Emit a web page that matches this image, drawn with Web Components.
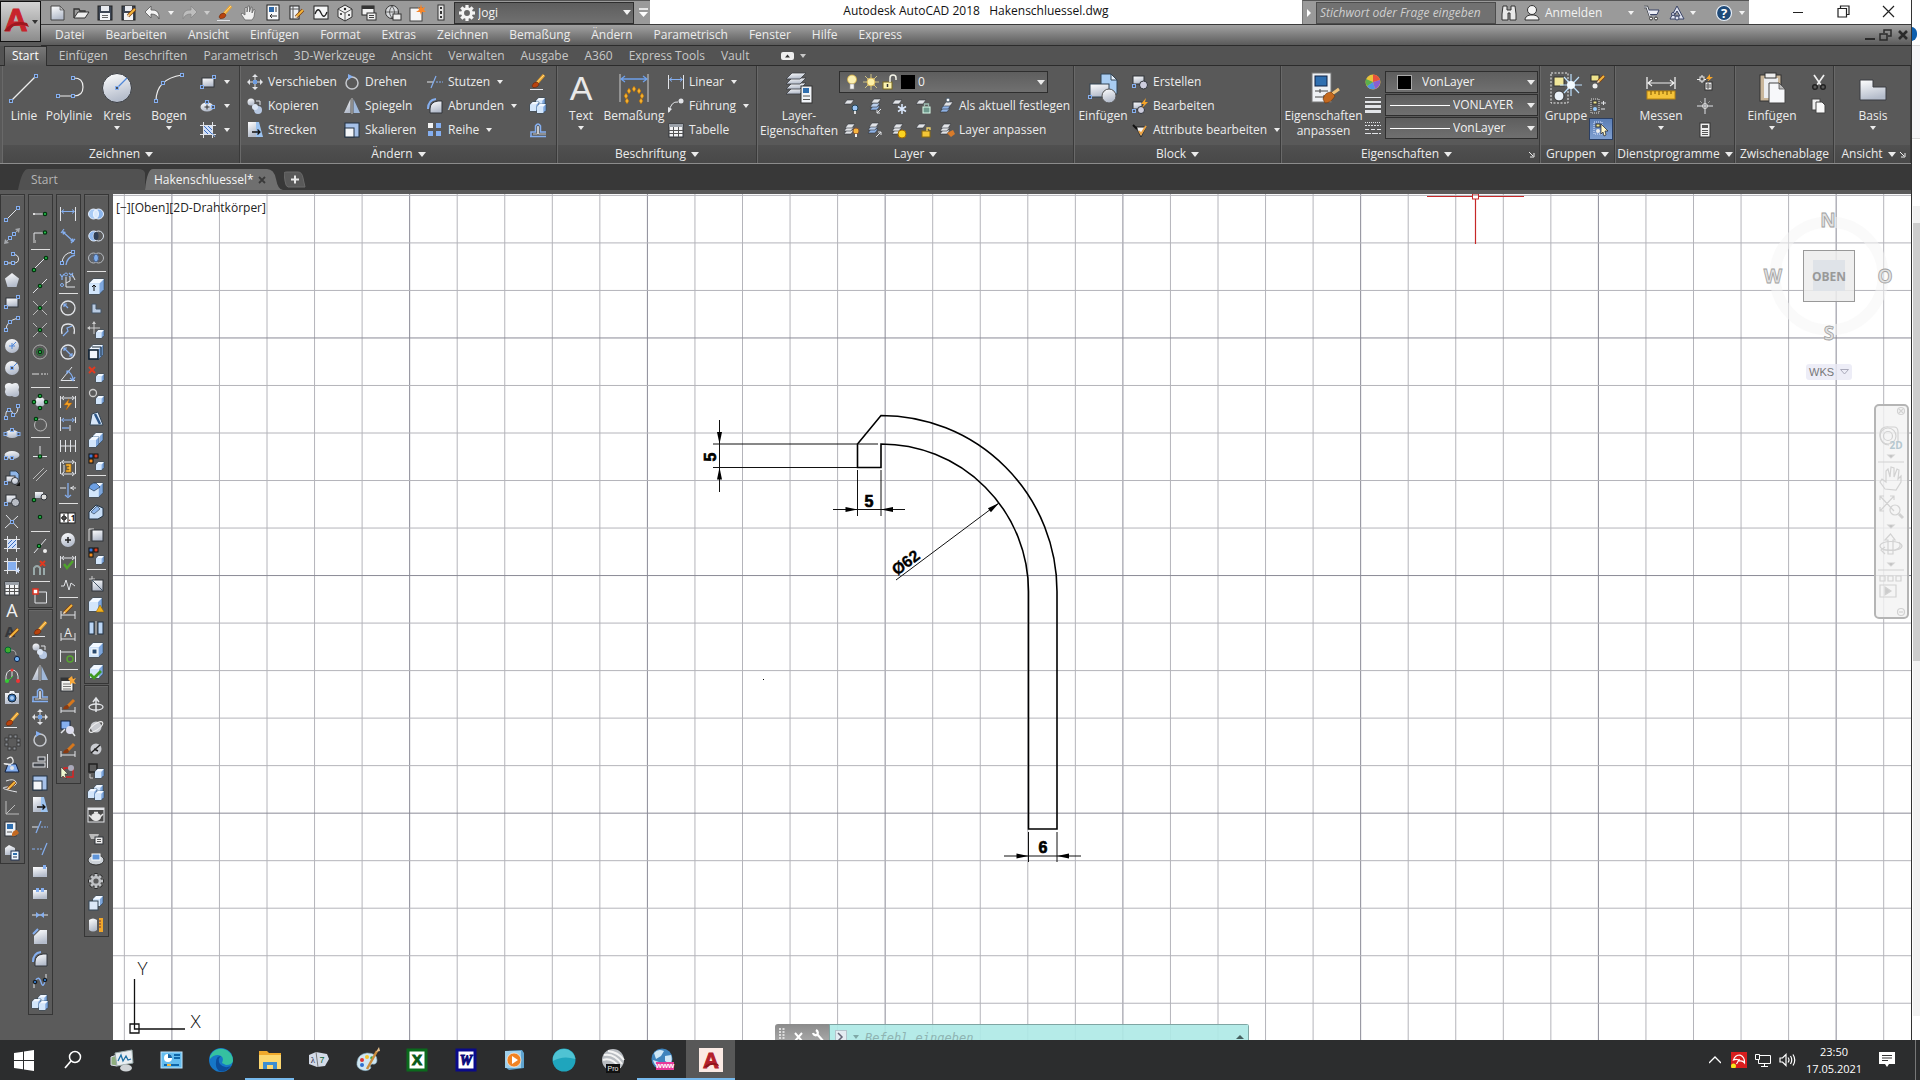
<!DOCTYPE html>
<html lang="de">
<head>
<meta charset="utf-8">
<title>Autodesk AutoCAD 2018 - Hakenschluessel.dwg</title>
<style>
html,body{margin:0;height:100%;overflow:hidden}
body{font:12px/16px "Open Sans","Noto Sans",sans-serif;color:#ececec;background:#fff}
</style>
</head>
<body>
<cad-desktop></cad-desktop>
<script>
const BASE = `*{box-sizing:border-box}
button,select,input{font:inherit;color:inherit;background:none;border:0;padding:0;margin:0;border-radius:0;outline:0}
button{cursor:pointer;white-space:nowrap}
.caret{flex:none;width:0;height:0;border:3px solid transparent;border-top:4px solid currentColor;border-bottom:0}`;

/* ---------- icon library (16 unit and 32 unit grids) ---------- */
const W='#e2e4e8', B='#85aff0', G='url(#g)', K='#30343a';
const l=(d,c=W,w=1)=>`<path d="${d}" fill="none" stroke="${c}" stroke-width="${w}"/>`;
const f=(d,c=G,s='none',w=1)=>`<path d="${d}" fill="${c}" stroke="${s}" stroke-width="${w}"/>`;
const n=(...p)=>{let s='';for(let i=0;i<p.length;i+=2)s+=`<rect x="${p[i]-1.5}" y="${p[i+1]-1.5}" width="3" height="3" fill="#4b5058" stroke="${B}"/>`;return s};
const c=(x,y,r,fill=G,s='none',w=1)=>`<circle cx="${x}" cy="${y}" r="${r}" fill="${fill}" stroke="${s}" stroke-width="${w}"/>`;
const r=(x,y,w,h,fill=G,s='none',sw=1)=>`<rect x="${x}" y="${y}" width="${w}" height="${h}" fill="${fill}" stroke="${s}" stroke-width="${sw}"/>`;
const gd=(...p)=>{let s='';for(let i=0;i<p.length;i+=2)s+=c(p[i],p[i+1],1.7,'#22c04a','#04350f',1.2);return s};
const cube=(x,y,s)=>f(`M${x} ${y+s*.3}L${x+s*.3} ${y}H${x+s}V${y+s*.7}L${x+s*.7} ${y+s}H${x}z`,'#7ea6dc','#26435f',.6)+f(`M${x} ${y+s*.3}H${x+s*.7}V${y+s}H${x}z`,'#d3e6fb')+f(`M${x} ${y+s*.3}L${x+s*.3} ${y}H${x+s}L${x+s*.7} ${y+s*.3}z`,'#f2f8ff');
const pencil=(x,y,s=8)=>l(`M${x} ${y+s}L${x+s} ${y}`,'#7b3c10',3.4)+l(`M${x+1} ${y+s-1}L${x+s} ${y}`,'#f4b63c',2)+f(`M${x-1} ${y+s+1}l1-3 2 2z`,'#f6dcb4');
const brush=l('M7 9L14 1','#eda52c',3)+l('M7.500 8L14 1','#ffd98a',1)+f('M2 12Q3 8 7 8L9 10Q8 14 3 13.500z','#b8430e','#5b1d03',.5)+l('M0 15.500H13',W,1);
const red=(x,y,s=5)=>l(`M${x} ${y}l${s} ${s}M${x+s} ${y}l${-s} ${s}`,'#e03a20',2);
const lay=(x,y,cc=W)=>f(`M${x+3} ${y}h7l-3 4h-7z`,cc,K,.6);
const stack=(cc=W)=>lay(1,8,cc)+lay(1,5,W)+lay(2,2,W);
const dim=(d='')=>l('M.5 2V14M15.500 2V14')+d;
const arr=(y,cc=W)=>l(`M2 ${y}H14M4 ${y-2}L1.500 ${y}L4 ${y+2}M12 ${y-2}L14.500 ${y}L12 ${y+2}`,cc);
const colors=r(1,0,4,4,'#3c78d8','#111')+r(6,0,4,4,'#d63a1e','#111')+r(1,5,4,4,'#ee8a20','#111');
const txt=(t,x,y,s,cc,e='')=>`<text x="${x}" y="${y}" font-size="${s}" fill="${cc}" text-anchor="middle" font-family="Open Sans,sans-serif" ${e}>${t}</text>`;
const gear=(x,y,R,cc)=>{let s='';for(let i=0;i<8;i++)s+=`<rect x="${x-R*.2}" y="${y-R}" width="${R*.4}" height="${R*.5}" fill="${cc}" transform="rotate(${i*45} ${x} ${y})"/>`;return s+c(x,y,R*.55,'none',cc,R*.36)};
const hatch=l('M3.500 0V16M12.500 0V16M0 3.500H16M0 12.500H16',W,1);
const movex=l('M8 1V6M8 10V15M1 8H6M10 8H15',W,1)+f('M8 0l3 3H5zM8 16l3-3H5zM0 8l3-3v6zM16 8l-3-3v6z',W);
const ICONS={
line:l('M2 14L14 2')+n(2,14,14,2),
xline:l('M2 14L14 2','#a5a8ad')+f('M0 16l1-5 4 4zM16 0l-1 5-4-4z','#a5a8ad')+n(6,10,10,6),
pline:l('M2 13H10Q14.500 13 14.500 9T10 4.500H8')+n(2,13,9,13,9,4),
polygon:f('M8 1L15 6.500L12.500 15H3.500L1 6.500z'),
rect:r(2,4,12,9,G,K)+n(14,3,2,13),
arc:l('M2 14Q2 5 14 2')+n(2,14,6,6,14,2),
circle:c(8,8,7)+l('M8 5V11M5 8H11M8 8L12 4','#4f86d8'),
circle2:c(8,8,7)+l('M8 8L13 3','#4f86d8')+n(8,8),
cloud:f('M2 2Q5 0 8 2Q12 0 14 2Q16 5 14.500 8Q16 12 14 14Q11 16 8 14Q4 15 2 13Q0 10 1.500 7Q0 4 2 2z'),
spline:l('M2 14Q1 6 5 6Q8 6 9 10Q14 11 14 2')+n(2,14,5,6,9,11,14,2),
ellipse:`<ellipse cx="8" cy="8" rx="7" ry="4" fill="${G}"/>`+n(1.500,8,14.500,8,8,4),
ellipse2:`<ellipse cx="7" cy="9" rx="6.500" ry="4.500" fill="${G}"/>`+l('M7 6.500V11.500M4.500 9H9.500','#333')+n(7,4,13,9),
elarc:`<ellipse cx="8" cy="7" rx="7.500" ry="4" fill="${G}"/>`+n(2,10,8,10),
insblock:f('M6 1H12L15 4V11H6z','#8fb6e8','#345')+r(2,6,9,6,G,K)+c(11,11,3.500,G,K)+n(2,13)+f('M16 12v4h-4z','#111'),
block:r(2,3,10,8,G,K)+c(11.500,10.500,4,'#b8bcc4',K)+n(2,12),
point:l('M2 1L14 14M1 14L14 2')+n(8,8),
hatch:r(4,4,8,8,'#cfdffa')+l('M4 8l4-4M4 12l8-8M8 12l4-4','#3d6fc0')+hatch,
hatch2:r(4,4,8,8,'#cfdffa')+l('M4 8l4 4M4 4l8 8M8 4l4 4','#3d6fc0')+hatch+l('M12 11L15 15',B),
grad:r(4,4,8,8,B)+hatch+f('M11 13l4-4v6z','#cfe0ff'),
table:r(1,2,14,13,'#f2f3f5',K)+r(1,2,14,3,'#9aa0a8')+l('M1 8.500H15M1 11.500H15M5.500 5V15M10.500 5V15','#555'),
A:txt('A',8,15,18,'#f1f1f1'),
atext:txt('A',6,13,15,'#33373c','font-weight="bold"')+pencil(6,5),
greendots:c(4,4,3,'#3fae2f','#063')+c(13,13,2.600,'#6fb1f2','#124')+l('M7 4Q12 4 12 9','#aaa'),
arctan:l('M2 13Q1 2 8 2T14 13',W)+l('M8 2V9',W)+c(8,2,1.500,'#e33')+l('M3 14L9 8','#3c3')+c(3,13,2,'#3c3')+c(14,13,2,'#e33'),
camera:f('M1 3H5L6 1H10L11 3H15V14H1z')+c(8,8,4,'#3b73b4','#123')+c(8,8,2,'#a8cdf5'),
brush,
dots:['2 5','6 2','11 2','14 6','14 10','10 14','5 14','2 10'].map(p=>{const[a,b]=p.split(' ');return r(a-1,b-1,3,3,'#8b8f95','#333',.8)}).join(''),
magic:f('M1 16L4 8H12L15 16z',B,'#124')+l('M3 3Q8-1 9 4T3 8T7 9','#e6e6e6',1.300)+c(8,12,2,W),
spl2:l('M2 3Q10 0 12 4T3 9T13 14')+pencil(4,4,7),
ucs:l('M2 1V14H15M2 14L11 5','#bcbcbc'),
props:r(1,0,11,14,'#eef1f5',K)+r(3,2,6,5,'#2f6fb0')+l('M3 10H8','#555')+f('M8 12Q9 8 13 8L15 11Q12 15 8 14z','#c36a22'),
refdoc:f('M1 4L5 1L11 4V11H1z')+r(7,7,8,9,'#eef5ff','#235')+r(9,9,4,2,'#2f6fb0')+l('M9 13H13','#235'),
tpoint:l('M3 8H14',W)+r(1,7,2,2,'#ddd')+gd(13,8),
tfrom:l('M2 12V5H11',W,1)+r(1,12,3,3,'#999')+gd(13,4.500),
endp:l('M2 13L13 2')+gd(2,14,14,2),mid:l('M1 15L15 1')+gd(8,8),
inter:l('M1 1L15 15M15 1L1 15','#bbb')+gd(8,8),
appint:l('M1 1L5 5M11 11L15 15M15 1L1 15','#bbb')+gd(8,8),
center:c(8,8,7,'none','#aaa')+c(8,8,3.500,'none','#1a6a2a')+gd(8,8),
ext:l('M0 8H7','#ddd')+l('M9 8h2M12 8h2M15 8h1','#ddd'),
quad:c(8,8,5)+gd(8,2,2,8,14,8,8,14),
tang:c(8.500,9,6,'none','#bbb')+gd(4,3),
perp:l('M8 2V13M1 12.500H15')+gd(8,12.500),
para:l('M1 13L12 2M4 15L15 4','#bbb'),
insn:r(3,4,8,6)+c(12,9,3,'#ddd',K)+gd(2,12),
node:gd(8,7),
near:l('M2 15L14 1')+gd(7,8)+c(13,13,2,'#eee'),
nosnap:l('M2 15V8Q5 4 8 8V15M12 8V15','#9aa',2)+red(8,1),
osnap:l('M4 4H14.500V15H3V5')+r(1,1,5,5,'#fff','#d32',1.500),
copy:c(4,4,3.500)+c(11,12,4,'#b7c8e2')+c(8,9,3,'#dce6f4')+l('M9 3H13V7',W),
mirror:f('M6.500 1V15H0z')+f('M9.500 1V15H16z','#9fb8da')+l('M8 0V16','#ddd',.8),
offset:l('M0 14.500H16M1 14V10H5.500V4Q8 0 10.500 4V10H16',B,1.500)+l('M3 12H7.500V5Q8 3 8.500 5V12H16',W,.8),
move:movex+r(6,6,4,4,'#6f9de0'),
rotate:c(8,9,6,'none','#c5c8cd',1.500)+f('M4 0L9 2.500L4 6z',B),
align:l('M15.500 1V15')+r(1,10,12,4,'#42464c',W)+r(6,4,7,4,'#42464c',W),
scale:r(1,1,14,14,'#a6c1e8','#234')+r(1,6,9,9,'#f3f5f8','#234'),
stretch:r(1,0,8,15)+f('M9 0H12L16 15H9z','#9cc3f0')+l('M5 10H13M10.500 7.500L13 10L10.500 12.500','#111',1.300),
trim:l('M0 8H6')+l('M4 14L9 2',B,1.200)+l('M9 8h2M12 8h2M15 8h1',B),
extend:l('M0 8H3M5 8h2M8 8h2',B)+l('M10 14L15 2',B,1.200),
brkpt:r(1,4,14,10)+r(11,2,3,4,B),brk:r(1,5,14,9)+r(4,3,3,4,B)+r(9,3,3,4,B),
join:l('M0 8H16',W)+f('M4 5L8 8L4 11zM12 5L8 8L12 11z',B),
chamfer:f('M2 7L8 1H15V15H2z')+l('M1 5L6 0',B,2),
fillet:f('M3 15V11Q3 4 11 3H15V15z',G,K)+l('M1 11Q1 2 9 1',B,2),
blend:l('M3 8Q7 2 9 9T13 8',B,1.300)+l('M2 15V9M14 7V1',W)+c(3,9,1.800,'#2e6fb8','#111')+c(13,7,1.800,'#2e6fb8','#111'),
explode:cube(6,0,9)+cube(0,4,9)+cube(7,6,9),
array:r(1,1,5,5,'#f2f2f2')+r(9,1,5,5,B)+r(1,9,5,5,B)+r(9,9,5,5,B),
dlin:l('M.5 1V15M15.500 1V15')+arr(5.500,B),
dali:l('M1 5L4 1M11 15L15 11M3 4L13 13',B,1.200)+f('M2 3l4 1-3 3zM14 14l-4-1 3-3z',B),
darc:l('M2 14Q2 3 13 2')+l('M6 15Q7 7 15 5',B,1.300)+n(2,13,13,2),
dord:l('M6 5V15H15M6 11L10 9V5M12 2L15 8')+l('M0 2L2 5L4 2M2 5V8M9 1L13 5M13 1L9 5',B,1.200)+c(6,2.500,1.500,'none',B)+c(2,13,1.500,'none',B),
drad:c(8,8,7,'none',W,1.300)+l('M8 8L4 4M4 7V4H7',B,1.200),
djog:l('M2 12Q0 2 8 2T14 12',W,1.300)+l('M3 14L8 9L7 6L12 4',B,1.200),
ddia:c(8,8,7,'none',W,1.300)+l('M4 4L12 12M4 7V4H7M12 9V12H9',B,1.200),
dang:l('M12 1L1 14.500H15')+l('M7 5Q13 8 13 14M10 12L13 14.500L15 11M7 8V5H10',B,1.200),
dquick:dim(arr(4))+f('M9 5L4 11H8L6 16L12 9H8z','#f8a526','#b35c00',.5),
dbase:l('M.5 1V15M15.500 1V7M10 9V15')+arr(4,B)+l('M2 12H9',B,1.300),
dcont:dim(l('M5.500 2V14M10.500 2V14M0 8H16')),
dspace:dim(arr(2)+arr(14))+f('M6 4H11V12H6V10H9V9H7V7H9V6H6z','#f6b63b','#a86a00',.6)+l('M4 5V12',W),
dbreak:l('M0 6H6M10 6H16M14 4L11 6L14 8')+l('M8 1V14M5 13L8 15.500L11 13',B,1.300),
dtol:r(0,3,15,10,'#fff','#222')+l('M8 3V13M4 4V12M1 8H7','#111')+c(4,8,2,'none','#111')+txt('.1',12,11,8,'#111','font-weight="bold"'),
dcen:c(8,8,7)+l('M8 5V11M5 8H11','#222',1.500),
dinsp:dim(arr(4))+l('M4 10L7 14L13 7','#4fa32c',2.500),
djl:l('M1 10L4 10L6 4L9 14L11 7L15 10',W),
dedit:l('M1 7V15M15 7V15M1 11H15')+pencil(4,1,8),
dte:l('M1 7V15M15 7V15M1 13H15')+txt('A',8,11,12,'#eee'),
dupd:dim(l('M0 4H16'))+c(10,11,3,'none','#57a332',1.500),
dstyle:r(1,2,12,13,'#f1f1ee',K)+r(1,2,12,3,'#333')+l('M3 8H11M3 10.500H11M3 13H11','#777')+f('M12 0l1 3 3-1-2 3 2 3-4-1-2 2V5L8 3z','#f8a83a'),
dbrush:l('M1 9V15M15 9V15M1 13H15')+l('M8 8L14 2','#d6771c',3)+f('M3 11Q4 7 8 7L9 10Q7 12 3 11z','#8a3a10'),
dzoom:r(1,1,9,8,B,'#124')+c(10,10,4,'#dde')+l('M5 9L1 13M12 12L15 16',W,1.500),
dsel:r(4,4,9,9,'none','#d22',1.500)+c(11,4,3,'#aab')+f('M1 3L8 10H5L6 15L3 12L1 14z','#eef7d0','#222',.5),
union:c(5.500,8,5,'#a9cbf5','#e8f1ff')+c(10.500,8,5,'#8bb5ec','#e8f1ff')+`<ellipse cx="8" cy="8" rx="2.500" ry="4" fill="#d8e8fc" stroke="#eef5ff"/>`,
subtr:c(10.500,8,5,'none','#dfe8f4')+f('M8 3.500A5 5 0 1 0 8 12.500A5 5 0 0 1 8 3.500z','#8fb8ee','#e8f1ff')+`<ellipse cx="8" cy="8" rx="2.500" ry="4" fill="#2e3e55"/>`,
intersect:c(5.500,8,5,'#60656c','#b5b9bf')+c(10.500,8,5,'none','#b5b9bf')+`<ellipse cx="8" cy="8" rx="2.500" ry="4" fill="#7fadeb" stroke="#124" stroke-width=".6"/>`,
box:cube(1,1,15)+l('M6 13V8M4 9L6 7L8 9','#111'),
lsolid:f('M4 4H8V9H13V13H4z','#b9cbe2','#456'),
mcube:l('M6 0V12M0 6H12','#ccc')+f('M6-1l2 3H4zM-1 6l3-2v4z','#ccc')+cube(8,8,8),
cubes:cube(1,1,14)+r(1,6,9,9,'#f2f6fb','#123',1.600)+l('M4 3H13V12','#123'),
xcube:red(1,1,6)+cube(8,8,8),rcube:c(5,5,3.500,'none','#ccc',1.300)+cube(8,8,8),
taper:f('M2 15L4 4L10 2L15 15z','#d8e7f9','#345')+l('M7 4L12 14','#2c5688',2.500),
stackc:cube(5,1,10)+cube(1,5,10),colcube:colors+cube(8,8,8),
filc:cube(1,1,14)+f('M1 6Q2 1 8 1L12 5L6 9z','#6d9fe2','#123',.6),chac:f('M1 8L8 1L15 4V12L10 15H1z','#c8def7','#234')+f('M3 8L9 2L12 5L6 10z','#8fb6ea','#234',.6),
shellc:l('M1 15V3H6','#ddd')+r(4,4,11,11,G,K),
imprint:l('M4 0V6M1 3H7','#ccc')+r(4,4,11,11,G,K)+l('M4 4L15 15','#456'),
warnc:cube(1,0,13)+f('M12 7L16 14H8z','#f2b21c','#8a5a00',.5),
mirr3:r(1,2,5,12,'#bcd6f5','#234')+r(10,2,5,12,'#bcd6f5','#234')+l('M8 1V15','#ccc'),
shell:cube(1,1,14)+r(4,7,5,5,'#27496f','#fff'),chkc:cube(2,1,13)+l('M2 10L6 14L13 7','#3f9a22',2.800),
orb1:l('M8 2V15M5 5L8 1L11 5',W,1.500)+`<ellipse cx="8" cy="10" rx="7" ry="3" fill="none" stroke="${W}" stroke-width="1.300"/>`,
orb2:c(8,8,5.500,'#c9cbd0')+`<ellipse cx="8" cy="8" rx="8" ry="3" fill="none" stroke="#eee" transform="rotate(-35 8 8)"/>`,
orb3:c(8,8,5.500,'#c9cbd0')+l('M3 12L12 4M6 8L10 10','#222',1.500),
views:r(1,1,8,8,'none','#222',1.500)+cube(7,6,9)+l('M2 11V15H5','#ccc'),
pot:r(0,1,16,14,'#4a4a4a',W)+r(0,1,16,2,W)+`<ellipse cx="8" cy="10" rx="5" ry="4" fill="#e9e9e9"/>`+l('M1 8L4 11M15 7L12 10M6 5.500H10','#e9e9e9',1.500),
pot2:f('M1 5H11L9 10H3z','#bbb')+r(7,8,8,7,'#eee',K)+l('M9 10.500H13M9 12.500H13','#555'),
pot3:`<ellipse cx="8" cy="9" rx="8" ry="5" fill="#cdd2d8" stroke="#333"/>`+r(4,3,8,6,'#5f94d8','#fff'),
gear:gear(8,8,8,'#2c2c2c')+gear(8,8,7,'#c0c2c5'),
stack2:cube(5,1,10)+r(1,6,9,9,'#dbe8f8','#345'),
cyl:f('M1 3Q5 0 9 3V13Q5 16 1 13z')+r(11,1,4,14,'#f0a62a')+l('M11 4H13M11 7H13M11 10H13','#733'),
new:f('M2 1H11L15 5V15H2z',G,'#444')+f('M11 1V5H15z','#bbb','#444',.6),
open:f('M1 13V4H6L7 6H12V8','none','#333',1.300)+f('M1 13L5 7H16L12 13z','#eee','#333'),
save:r(1,1,14,14,'#3d4654','#222')+r(4,1,8,5,'#e8eaee')+r(3,8,10,7,'#f3f4f6')+l('M5 10.500H11M5 12.500H11','#666'),
saveas:r(1,1,13,14,'#3d4654','#222')+r(4,1,7,5,'#e8eaee')+r(3,8,9,7,'#f3f4f6')+pencil(7,4,7),
undo:f('M0 7L6 1V5Q15 4 14 14Q12 9 6 9V13z','#f4f4f4','#555',.8),
redo:f('M16 7L10 1V5Q1 4 2 14Q4 9 10 9V13z','#bdbdbd','#888',.8),
hand:f('M4 15L0 9L1 8L4 10V3L5 2L6 3V7L7 1L8.500 1V7L10 2L11 2L11 8L13 4L14 5L13 12L11 15z','#f0f0f0','#666',.8),
sheet:r(2,0,12,15,'#f7f8fa','#222')+r(4,2,5,5,'#2e68a8')+l('M11 2V7M5 11H12M7 9L5 11L7 13','#333'),
sheetp:r(1,1,9,13,'#eef1f5','#222')+l('M1 4H10M4 1V14','#555')+pencil(7,5,7),
graph:r(1,1,14,13,'#f4f5f6','#222')+l('M2 9Q5 1 8 8T14 7','#222',1.300),
dice:f('M8 0L15 4V12L8 16L1 12V4z','#f0f0f0','#333')+l('M1 4L8 8L15 4M8 8V16','#333',.8)+c(8,4,1.200,'#222')+c(4,9,1,'#222')+c(12,10,1,'#222'),
props2:r(1,1,12,9,'#f3f3f3','#222')+r(1,1,12,3,'#333')+r(6,8,9,7,'#eee','#333')+l('M8 10.500H13M8 12.500H13','#444'),
globe:c(7,7,6.500,'#d8dadd','#333')+l('M1 7H14M7 1Q2 7 7 13M7 1Q12 7 7 13','#444',.8)+r(8,9,8,6,'#eee','#333'),
newstar:r(1,3,12,13,'#f6f6f6','#444')+f('M12-1l1 4 3-1-1 3 2 2-4 0-1 3-1-3-4 0 3-2-1-3 2 1z','#f6862a'),
bar:r(5,0,6,15,'#e6e6e6','#333')+r(7,2,2,2,'#333')+r(7,6,2,3,'#333')+r(7,11,2,2,'#333'),
gearw:gear(8,8,8,'#f4f4f4'),
binoc:f('M2 1H6V5H10V1H14L15 9V15H9V8H7V15H1V9z','#e9e9e9','#333'),
person:c(8,5,4.500,'#f4f4f4','#333')+f('M1 15Q1 11 6 10H10Q15 11 15 15z','#f4f4f4','#333'),
cart:l('M0 2H3L6 10.500H13',K,2.600)+f('M4 5H15L13 9.500H5.500z','#eceef6','#3a4466')+l('M0 2H3L6 11H13','#eceef6',1.200)+c(7,13.500,1.500,'#fff','#333')+c(12,13.500,1.500,'#fff','#333'),
a360:f('M8 1L15 14H1zM8 6L5 11H11z','#dfe3f2','#3a4466')+c(8,13,2,'#dfe3f2','#3a4466')+c(4,9,1.500,'#dfe3f2','#3a4466'),
help:c(8,8,7.500,'#1f4a78','#e8eef6',1.200)+txt('?',8,13,13,'#fff','font-weight="bold"'),
mleader:l('M1 14Q3 3 10 4')+f('M0 15V9L4 11z',W)+c(13,3,2.500,W),
lay1:lay(1,2)+c(12,10,3,'#9cc6f7','#245')+r(11,13,2,3,'#ddd'),lay2:lay(3,8,'#8fb3e6')+lay(3,5,'#b9cdea')+lay(4,1)+l('M14 11L10 15M10 12V15H13',W),
lay3:lay(1,2)+l('M11 6V16M7 8.500L15 13.500M15 8.500L7 13.500','#dceaff',1.500),lay4:lay(1,2)+r(8,9,7,6,'#6f9a8d','#dfe')+l('M9.500 9V6H13.500V9','#9cbab0',1.300),
lay5:lay(1,10,'#8fb3e6')+lay(2,7,'#8fb3e6')+lay(4,4)+c(9,2,2,'#fff','#456'),
lay6:stack()+c(13,9,3,'#f8b53c','#853')+r(12,12,2,3,'#eee'),lay7:lay(1,7,'#8fb3e6')+lay(1,4,'#b9cdea')+lay(2,1)+l('M9 15L14 10M11 10H14V13',W),
lay8:stack()+c(11,12,4,'#fbd321','#a66b00'),lay9:lay(1,2)+r(7,9,8,6,'#f4c637','#8a6a10')+l('M12 9V6H15V8','#f4d66a',1.300),
lay10:stack()+f('M8 11L14 8L16 12L12 15z','#d87b2a'),
bulb:c(8,5.500,4.500,'#fbf0b2','#d8b040',.8)+r(6,10,4,5,'#f4f4f4','#999',.6),sun:l('M8 0V16M0 8H16M2 2L14 14M14 2L2 14','#e8d98a',.8)+c(8,8,4,'#fdf1a6','#d9b75a'),
lock:r(1,8,9,7,'#fbf3b0','#7a6a20')+l('M8 8V4Q8 1 11 1T14 4V6','#f4f4e8',1.500)+l('M5.500 10V13','#333',1.500),
bcreate:r(1,2,11,8,G,K)+c(11.500,11,4,'#ccd',K)+n(2,12),bedit:r(1,4,9,7,G,K)+c(9,12,3.500,'#ccd',K)+n(2,13)+f('M14 0L9 6H12L10 10L16 4H13z','#f6a428'),
battr:f('M4 5H14L9 15z','#f5f5f5','#222')+l('M1 3L5 7','#111',2)+l('M7 9L9 12L14 4','#e8a040',1.800),
wheel:c(8,8,7.500,'#eac33b')+f('M8 8L8 .5A7.500 7.500 0 0 1 15 6z','#e9523c')+f('M8 8L15 6A7.500 7.500 0 0 1 10 15z','#8a5fd0')+f('M8 8L10 15A7.500 7.500 0 0 1 2 12z','#4f92e6')+f('M8 8L2 12A7.500 7.500 0 0 1 1 5z','#5bb04c'),
lw:r(0,0,16,1,W)+r(0,4,16,2,W)+r(0,8,16,3,W)+r(0,13,16,3,W),
lt:`<g stroke="${W}" stroke-width="1"><path d="M0 2.500H16" stroke-dasharray="1 1"/><path d="M0 5.500H16" stroke-dasharray="2 1"/><path d="M0 9.500H16" stroke-dasharray="4 2"/><path d="M0 13.500H16" stroke-dasharray="6 1"/></g>`,
g1:r(1,1,8,6,'#eee38c','#333')+pencil(8,2,6)+c(5,12,2.500,'#eee'),g2:`<path d="M1 1H9V15H1z" fill="none" stroke="#ddd" stroke-dasharray="1 1"/>`+r(3,3,4,3,'#f0e68c','#333')+c(5,11,2,'#9cf')+l('M11 5H16M13.500 3V7M11 11H15',W),
g3:`<path d="M1 1H9V13H1z" fill="none" stroke="#dde6ff" stroke-dasharray="1 1"/>`+r(3,3,4,3,'#f0e68c','#333')+c(5,10,2,'#eee')+f('M8 3L15 10H12L13 14L11 15L10 11L8 13z','#fff6c8','#222',.7),
mid1:l('M5 1V9M0 5.500H9','#eee')+r(3,3,4,4,'#555','#eee')+f('M13 0L9 5H12L10 8L16 3H13z','#f6a428')+r(8,8,7,8,'#eee','#333')+l('M9 11H14M9 13H14M11 9V15','#555'),
mid2:l('M8 0V16M0 8H16',W)+c(8,8,2.500,'none','#ddd')+l('M3 3L5 5M13 3L11 5','#999'),
calc:r(3,1,10,14,'#eee','#333')+r(5,3,6,3,'#555')+l('M5 8.500H11M5 10.500H11M5 12.500H11','#555',1.100),
cut:l('M3 1L10 11M13 1L6 11','#f0f0f0',1.700)+c(4,13,2.300,'none','#222',1.500)+c(12,13,2.300,'none','#222',1.500),
copyd:r(1,1,8,11,'#eee','#444')+f('M5 4H11L14 7V15H5z','#fafafa','#444'),
min:l('M2 8.500H12','#222'),max:l('M2 4.500H10.500V13H2zM4.500 4V2H13V10.500H11','#222',1.200),close:l('M2 2L13 13M13 2L2 13','#222',1.200),
dmin:l('M4 12H14','#2a2a2a',2),dmax:l('M2 7H9V13H2zM6 6V3H13V9H10','#2a2a2a',1.500),dclose:l('M4 4L12 12M12 4L4 12','#2a2a2a',2.600)
};
const BIG={
line:l('M3 29L28 4','#eee',1.200)+n(3,29,28,4),
pline:l('M5 24H21Q30 24 30 15T21 6','#eee',1.200)+n(5,24,20,24,20,6),
circle:c(16,16,14.500,G,'#3a3d42')+l('M16 16L26 6','#4f86d8',1.300)+n(16,16),
arc:l('M3 29Q3 7 29 3','#eee',1.200)+n(3,29,10,11,29,3),
A:'<text x="16" y="28" font-size="34" fill="#e9e9e9" text-anchor="middle" font-family="Liberation Sans,sans-serif">A</text>',
dim:l('M2 2V30M30 2V30','#ccc')+l('M3 7H29M7 4L3 7L7 10M25 4L29 7L25 10','#6ea0ea',1.300)+[[8,24],[11,19],[16,17],[21,19],[24,24],[9,29],[23,29]].map(p=>f(`M${p[0]} ${p[1]-3}l2 3-2 3-2-3z`,'#f6b02c','#a66000',.5)).join(''),
layers:[19,14,9,4].map(y=>f(`M9 ${y-3}H23L17 ${y+3}H3z`,G,'#3a3d42',.8)).join('')+r(18,14,11,17,'#f1f4f8','#333')+r(20,16,6,5,'#2f6fb0')+l('M20 24H27M20 27.500H27','#555'),
insert:f('M14 2H24L30 8V22H14z','#a9cdf2','#345')+f('M24 2V8H30z','#e8f2fd','#345')+r(3,12,19,13,G,'#345')+c(22,24,7,G,'#555')+n(3,25),
props:r(4,1,19,29,'#eef1f5','#777')+r(7,4,12,10,'#2f6fb0','#124')+l('M7 19H20M7 25H20M12 17V21M16 23V27','#444')+l('M24 22L31 17','#eec27a',3)+f('M15 27Q17 20 23 20L27 24Q23 31 17 31z','#c4691f','#6a3208',.6),
group:`<path d="M1 1H18V31H1z" fill="none" stroke="#eee" stroke-dasharray="2 1.500"/>`+r(4,5,10,9,'#f1e79a','#333')+c(9,24,5,'#eaf1f8','#333')+l('M21 2V24M10 13H32M14 5L29 21M29 5L14 21','#bfe2ff',1.200)+c(21,13,4,'#f2faff'),
meas:l('M2 5V17M30 5V17','#eee',1.300)+l('M3 11H29M7 8L3 11L7 14M25 8L29 11L25 14','#eee',1.200)+r(2,19,28,8,'#f5c339','#b98410')+l('M6 19V23M10 19V22M14 19V23M18 19V22M22 19V23M26 19V22','#7a5400'),
paste:r(4,3,21,26,'#c9b69a','#333')+r(8,6,14,20,'#eceef1')+r(9,1,11,5,'#eee','#333')+f('M13 11H23L29 17V31H13z','#f7f8fa','#444')+f('M23 11V17H29z','#bbb','#444',.7),
basis:f('M3 8H16V15H29V28H3z',G,'#3a3d42')
};
const DEFS='<defs><linearGradient id="g" x1="0" y1="0" x2=".3" y2="1"><stop offset="0" stop-color="#fff"/><stop offset="1" stop-color="#b4bccb"/></linearGradient></defs>';

class Base extends HTMLElement{
  connectedCallback(){ if(this.shadowRoot) return;
    const s=this.attachShadow({mode:'open'}); s.innerHTML=`<style>${BASE}${this.css()}</style>${this.html()}`; }
  a(k,d=''){return this.getAttribute(k)??d}
}
const def=(name,css,html)=>customElements.define(name,class extends Base{css(){return css}html(){return typeof html==='function'?html(this):html}});

def('cad-icon',':host{display:block;flex:none;width:16px;height:16px}:host([big]){width:32px;height:32px}svg{display:block;width:100%;height:100%;overflow:visible}',
  e=>{const big=e.hasAttribute('big'),z=big?32:16;return `<svg viewBox="0 0 ${z} ${z}" aria-hidden="true">${DEFS}${(big?BIG:ICONS)[e.a('name')]||''}</svg>`});

/* labelled ribbon command on one 24px row */
def('cad-cmd',`:host{display:block;height:24px}button{display:flex;align-items:center;gap:4px;height:24px}cad-icon{margin:0 1px}.caret{margin-left:3px}
:host([on]) button{background:linear-gradient(#5c7fb6,#7f9fd0);border:1px solid #2b3f63;height:22px;padding:0 2px}`,
  e=>`<button type="button" aria-label="${e.a('label')||e.a('title')}"><cad-icon name="${e.a('icon')}"></cad-icon>${e.a('label')?`<span>${e.a('label')}</span>`:''}${e.hasAttribute('caret')?'<i class="caret"></i>':''}</button>`);

/* large command: picture above its label */
def('cad-big',`:host{display:block;height:76px}button{width:100%;display:flex;flex-direction:column;align-items:center;padding-top:2px;line-height:15px}span{margin-top:4px;text-align:center}.caret{margin-top:3px}`,
  e=>`<button type="button"><cad-icon big name="${e.a('icon')}"></cad-icon><span>${e.a('label').replace('|','<br>')}</span>${e.hasAttribute('caret')?'<i class="caret"></i>':''}</button>`);

def('cad-combo',`:host{display:block;height:22px}
div{display:flex;align-items:center;height:100%;border:1px solid #2e2e2e;background:linear-gradient(#5e5e5e,#707070);padding:0 2px 0 4px;gap:3px}
select{appearance:none;flex:1;min-width:0;height:100%;color:#f2f2f2}option{color:#222}.caret{border-width:5px 4px 0}`,
  e=>`<div><slot></slot><select aria-label="${e.a('title')}"><option>${e.a('value')}</option></select><i class="caret"></i></div>`);

def('cad-panel',`:host{display:flex;flex-direction:column;border-right:1px solid #3a3a3a;border-left:1px solid #696969;min-width:0}
.b{display:flex;height:79px;padding:4px 0 0 var(--pl,2px);background:#595959}
.f{display:flex;align-items:center;justify-content:center;height:18px;background:linear-gradient(#505050,#484848);position:relative;white-space:nowrap}
.f .caret{border-width:5px 4px 0}.f svg{position:absolute;right:4px;top:7px}:host([dlg]) .f{padding-right:8px}button{display:flex;align-items:center;gap:5px}`,
  e=>`<div class="b"><slot></slot></div><div class="f"><button type="button">${e.a('label')}${e.hasAttribute('plain')?'':'<i class="caret"></i>'}</button>${e.hasAttribute('dlg')?'<svg width="6" height="6"><path d="M0 0L4 4M5 1V5H1" stroke="#eee" fill="none"/></svg>':''}</div>`);

const I=name=>`<cad-icon name="${name}"></cad-icon>`;
const ib=(name,t)=>`<button type="button" aria-label="${t||name}">${I(name)}</button>`;
const cmds=s=>s.map(([i,t,k])=>`<cad-cmd icon="${i}" label="${t||''}" title="${t||i}" ${k?'caret':''}></cad-cmd>`).join('');

def('cad-ribbon',`:host{display:grid;grid-template-columns:238fr 317fr 200fr 317fr 207fr 259fr 75fr 120fr 99fr 77fr;padding-left:2px;background:#595959;height:98px;border-bottom:1px solid #8c8c8c}
.c{flex:none;width:var(--w)}cad-big{flex:none;width:var(--w)}.row{display:flex;height:24px;align-items:center;gap:8px;padding-left:4px;white-space:nowrap}.row button{display:flex;align-items:center;gap:4px}
cad-combo{flex:none}.lc{width:209px;margin:1px 0}.props{display:grid;grid-template-columns:20px 153px;align-items:center;align-content:start;row-gap:1px;padding-top:1px}
.sw{width:15px;height:15px;background:#000;border:1px solid #aaa;margin:0 7px}.sq{width:14px;height:14px;background:#000}.ln{flex:none;height:1px;width:60px;background:#fff}`,
`<cad-panel label="Zeichnen"><cad-big icon="line" label="Linie" style="--w:38px"></cad-big><cad-big icon="pline" label="Polylinie" style="--w:52px"></cad-big><cad-big icon="circle" label="Kreis" caret style="--w:44px"></cad-big><cad-big icon="arc" label="Bogen" caret style="--w:60px"></cad-big><div class="c" style="--w:34px">${cmds([['rect','',1],['ellipse2','',1],['hatch2','',1]])}</div></cad-panel>
<cad-panel label="Ändern" style="--pl:5px"><div class="c" style="--w:97px">${cmds([['move','Verschieben'],['copy','Kopieren'],['stretch','Strecken']])}</div><div class="c" style="--w:83px">${cmds([['rotate','Drehen'],['mirror','Spiegeln'],['scale','Skalieren']])}</div><div class="c" style="--w:103px">${cmds([['trim','Stutzen',1],['fillet','Abrunden',1],['array','Reihe',1]])}</div><div class="c">${cmds([['brush'],['explode'],['offset']])}</div></cad-panel>
<cad-panel label="Beschriftung" style="--pl:3px"><cad-big icon="A" label="Text" caret style="--w:40px"></cad-big><cad-big icon="dim" label="Bemaßung" style="--w:66px"></cad-big><div class="c">${cmds([['dlin','Linear',1],['mleader','Führung',1],['table','Tabelle']])}</div></cad-panel>
<cad-panel label="Layer" style="--pl:1px"><cad-big icon="layers" label="Layer-|Eigenschaften" style="--w:80px"></cad-big><div class="c"><cad-combo class="lc" title="Layer" value="0">${I('bulb')}${I('sun')}${I('lock')}<i class="sq"></i></cad-combo>
<div class="row">${ib('lay1')}${ib('lay2')}${ib('lay3')}${ib('lay4')}<button type="button">${I('lay5')}Als aktuell festlegen</button></div><div class="row">${ib('lay6')}${ib('lay7')}${ib('lay8')}${ib('lay9')}<button type="button">${I('lay10')}Layer anpassen</button></div></div></cad-panel>
<cad-panel label="Block" style="--pl:0px"><cad-big icon="insert" label="Einfügen" style="--w:56px"></cad-big><div class="c">${cmds([['bcreate','Erstellen'],['bedit','Bearbeiten'],['battr','Attribute bearbeiten',1]])}</div></cad-panel>
<cad-panel label="Eigenschaften" dlg style="--pl:0px"><cad-big icon="props" label="Eigenschaften|anpassen" style="--w:83px"></cad-big><div class="props">${I('wheel')}<cad-combo title="Farbe" value="VonLayer"><i class="sw"></i></cad-combo>${I('lw')}<cad-combo title="Linienstärke" value="VONLAYER"><i class="ln"></i></cad-combo>${I('lt')}<cad-combo title="Linientyp" value="VonLayer"><i class="ln"></i></cad-combo></div></cad-panel>
<cad-panel label="Gruppen"><cad-big icon="group" label="Gruppe" style="--w:46px"></cad-big><div class="c">${cmds([['g1'],['g2']])}<cad-cmd icon="g3" title="Gruppenauswahl" on></cad-cmd></div></cad-panel>
<cad-panel label="Dienstprogramme" style="--pl:14px"><cad-big icon="meas" label="Messen" caret style="--w:62px"></cad-big><div class="c" style="margin-left:4px">${cmds([['mid1'],['mid2'],['calc']])}</div></cad-panel>
<cad-panel label="Zwischenablage" plain style="--pl:8px"><cad-big icon="paste" label="Einfügen" caret style="--w:56px"></cad-big><div class="c" style="margin-left:10px">${cmds([['cut'],['copyd']])}</div></cad-panel>
<cad-panel label="Ansicht" dlg><cad-big icon="basis" label="Basis" caret style="--w:72px"></cad-big></cad-panel>`);

def('cad-titlebar',`:host{display:flex;height:24px;background:#fff;color:#f2f2f2}
.q{display:flex;align-items:center;gap:8px;padding-left:8px;width:609px;background:#9a9a9a;border-top:1px solid #555}
.q .caret{margin:0 -1px}.q cad-combo{width:180px;margin-left:-3px}.q button{display:block}.q>svg{margin-left:-3px}
h1{flex:1;margin:0;font-size:12px;line-height:21px;font-weight:400;color:#111;text-align:center;white-space:pre}
.s{display:flex;align-items:center;width:447px;background:#9a9a9a;border-top:1px solid #555;border-left:1px solid #777}
.s>i.tri{width:0;border:4px solid transparent;border-left:4px solid #fff;border-right:0;margin:0 5px 0 4px}
input{width:180px;height:22px;border:1px solid #4c4c4c;background:#717171;font-style:italic;padding:0 3px}input::placeholder{color:#cfcfcf;opacity:1}
.s button{display:flex;align-items:center;gap:5px}.w{display:flex;margin-left:27px}.w button{width:45px;display:grid;place-items:center;height:24px}`,
`<div class="q">${ib('new','Neu')}${ib('open','Öffnen')}${ib('save','Speichern')}${ib('saveas','Speichern unter')}${ib('undo','Zurück')}<i class="caret"></i>${ib('redo','Wiederherstellen')}<i class="caret" style="color:#ccc"></i>${ib('brush','Anpassen')}${ib('hand','Pan')}${ib('sheet')}${ib('sheetp')}${ib('graph')}${ib('dice')}${ib('props2')}${ib('globe')}${ib('newstar')}${ib('bar')}
<cad-combo title="Arbeitsbereich" value="Jogi">${I('gearw')}</cad-combo><svg width="9" height="12"><path d="M0 2H9" stroke="#fff" stroke-width="1.500"/><path d="M0 5H9L4.500 10z" fill="#fff"/></svg></div>
<h1>Autodesk AutoCAD 2018   Hakenschluessel.dwg</h1>
<div class="s"><i class="tri"></i><input aria-label="Suche" placeholder="Stichwort oder Frage eingeben"><button type="button" aria-label="Suchen" style="margin:0 7px 0 5px">${I('binoc')}</button><button type="button">${I('person')}Anmelden</button><i class="caret" style="margin-left:auto"></i><button type="button" aria-label="App Store" style="margin:0 9px 0 10px">${I('cart')}</button>${ib('a360','A360')}<i class="caret" style="margin:0 20px 0 5px"></i>${ib('help','Hilfe')}<i class="caret" style="margin:0 4px 0 7px"></i></div>
<div class="w">${ib('min','Minimieren')}${ib('max','Wiederherstellen')}${ib('close','Schließen')}</div>`);

def('cad-menubar',`:host{display:flex;align-items:center;height:22px;border-top:1px solid #3a3a3a;border-bottom:1px solid #2c2c2c;background:linear-gradient(#a2a2a2,#5a5a5a)}
nav{display:flex;gap:21px;padding-left:14px;flex:1}.d{display:flex;gap:1px}`,
`<nav aria-label="Menü">${'Datei Bearbeiten Ansicht Einfügen Format Extras Zeichnen Bemaßung Ändern Parametrisch Fenster Hilfe Express'.split(' ').map(t=>`<button type="button">${t}</button>`).join('')}</nav><div class="d">${ib('dmin','Zeichnung minimieren')}${ib('dmax','Zeichnung wiederherstellen')}${ib('dclose','Zeichnung schließen')}</div>`);

def('cad-header',`:host{display:grid;grid-template-columns:41px 1fr;grid-template-rows:24px 22px;background:#5a5a5a}
.app{grid-row:1/3;border:1px solid #111;margin:1px 0 4px;background:linear-gradient(#d4d4d4,#8c8c8c);display:flex;align-items:center;justify-content:space-between;padding:0 2px 0 1px}.app .caret{color:#333}`,
`<button type="button" class="app" aria-label="Anwendungsmenü"><svg width="28" height="39" viewBox="0 0 28 39"><text x="14" y="29" text-anchor="middle" font-family="Liberation Sans,sans-serif" font-weight="bold" font-size="32" fill="#c8242c" stroke="#c8242c">A</text><path d="M2 29Q11 17 25 21L27 25Q13 19 7 29z" fill="#9d1820"/></svg><i class="caret"></i></button><cad-titlebar></cad-titlebar><cad-menubar></cad-menubar>`);

def('cad-tabs',`:host{display:flex;align-items:stretch;height:20px;padding-left:4px;background:#535353;border-bottom:1px solid #2c2c2c;color:#c8c8c8}
.l{display:flex}button{padding:0 8px}button[aria-selected=true]{color:#fff;background:linear-gradient(#7a7a7a,#595959);box-shadow:inset 1px 1px #2f2f2f,inset -1px 0 #2f2f2f;margin:0 4px -1px 0}
.m{display:flex;align-items:center;gap:6px;margin-left:24px}`,
`<div class="l" role="tablist">${'Start|Einfügen|Beschriften|Parametrisch|3D-Werkzeuge|Ansicht|Verwalten|Ausgabe|A360|Express Tools|Vault'.split('|').map((t,i)=>`<button type="button" role="tab" aria-selected="${!i}">${t}</button>`).join('')}</div><div class="m"><svg width="13" height="8"><rect width="13" height="8" rx="2" fill="#eee"/><path d="M4 5.500L6.500 2.500L9 5.500z" fill="#333"/></svg><i class="caret"></i></div>`);

def('cad-files',`:host{display:flex;align-items:flex-end;height:30px;padding:0 0 4px 18px;background:linear-gradient(#383838 0 26px,#5a5a5a 26px)}
button{position:relative;height:21px;display:flex;align-items:center;justify-content:space-between}button span{position:relative}
svg{position:absolute;inset:0;width:100%;height:100%}.x svg{position:static;width:8px;height:8px;display:block}
.a{width:127px;padding-left:13px;color:#b5b5b5}.b{width:138px;padding:0 17px 0 9px;margin-right:1px;color:#f5f5f5}.p{width:22px}`,
`<button type="button" class="a"><svg viewBox="0 0 127 21" preserveAspectRatio="none"><path d="M0 21Q4 0 10 0H120Q126 0 127 4V21z" fill="#515151"/></svg><span>Start</span></button><button type="button" class="b"><svg viewBox="0 0 138 21" preserveAspectRatio="none"><path d="M0 21Q2 0 8 0H122Q129 0 131 10Q133 21 138 21z" fill="#6f6f6f"/></svg><span>Hakenschluessel*</span><span class="x"><svg><path d="M1 1L7 7M7 1L1 7" stroke="#3a3a3a" stroke-width="1.800"/></svg></span></button><button type="button" class="p" aria-label="Neue Zeichnung"><svg viewBox="0 0 22 21"><path d="M0 4Q0 3 3 3H14Q18 3 19 9L21 18H4Q2 18 1 12z" fill="#595959" stroke="#6a6a6a"/><path d="M11 6.500V14.500M7 10.500H15" stroke="#e8e8e8" stroke-width="2"/></svg></button>`);

/* docked tool palette; a dash in the list is a divider */
def('cad-toolbar',`:host{display:block;width:25px;border:1px solid #363636;padding:8px 0 0;background:#5b5b5b;box-shadow:inset 0 1px #676767}
button{display:grid;place-items:center;width:22px;height:22px}hr{width:19px;height:1px;border:0;margin:2px auto 3px;background:#e0e0e0}`,
  e=>e.a('tools').split(' ').map(t=>t==='-'?'<hr>':ib(t)).join(''));

const svgDrawing=()=>{
  let s='';
  for(let i=0;i<80;i++){const x=171.900+47.550*(i-1);s+=`<path d="M${x} 194V3000" stroke="${(i-1)%5?'#b4b4ba':'#8a8a96'}"/>`}
  for(let i=0;i<50;i++){const y=195.400+47.520*i;s+=`<path d="M113 ${y}H5000" stroke="${(i-3)%5?'#b4b4ba':'#8a8a96'}"/>`}
  const ah=(x,y,a)=>`<path d="M0 0L-12 2.500V-2.500z" fill="#000" transform="translate(${x} ${y}) rotate(${a})"/>`;
  return `<g transform="translate(-113 -194)" stroke-width="1">${s}
  <g fill="none" stroke="#000" stroke-width="1.600"><path d="M881 415.500A176 176 0 0 1 1057 591.500V829H1028.500V591.500A147.500 147.500 0 0 0 881 444V467.500H857.500V444z"/></g>
  <g fill="none" stroke="#111"><path d="M713 444H878M713 467.500H857M719.500 420V492M857.500 470V516M881 470V516M833 509.500H905M1028.500 832V862M1057 832V862M1004 856H1081M896 580L999 503"/></g>
  ${ah(719.500,444,90)}${ah(719.500,467.500,-90)}${ah(857.500,509.500,0)}${ah(881,509.500,180)}${ah(1028.500,856,0)}${ah(1057,856,180)}${ah(999,503,-37)}
  <g fill="#000" stroke="#000" stroke-width=".7" font-family="Liberation Sans,Arial,sans-serif" font-size="16" font-weight="bold" text-anchor="middle"><text transform="translate(716 457) rotate(-90)">5</text><text x="869" y="507">5</text><text x="1043" y="853">6</text><text transform="translate(909 567) rotate(-37)" stroke-width=".3">Ø62</text></g>
  <rect x="763" y="679" width="1" height="1"/>
  <g fill="none" stroke="#111" stroke-width="1.300"><path d="M134.500 979V1029H185M130 1024H139V1033H130z"/></g>
  <g fill="#111" font-family="Open Sans,sans-serif" font-weight="300" font-size="19" text-anchor="middle"><text x="142.500" y="975">Y</text><text x="195.500" y="1028">X</text></g>
  <g fill="none" stroke="#c62828"><path d="M1427 196.500H1473M1478 196.500H1524M1475.500 199V244" stroke-width="1.200"/><rect x="1472.500" y="194" width="6" height="5"/></g></g>`};

def('cad-viewcube',`:host{display:block;width:146px}svg{display:block;flex:none}
button{display:flex;align-items:center;gap:6px;width:46px;height:16px;margin:16px auto 0;padding:0 3px;border-radius:3px;background:#e9e9f5cc;color:#777;font:11px "Liberation Sans",Arial,sans-serif}`,
`<svg width="146" height="142" viewBox="1756 206 146 142" font-family="Open Sans,sans-serif" font-weight="bold" text-anchor="middle"><circle cx="1829" cy="276" r="54" fill="none" stroke="#f6f6f6" stroke-opacity=".5" stroke-width="11"/><rect x="1803.500" y="250.500" width="51" height="51" fill="#ececec" fill-opacity=".85" stroke="#999"/><rect x="1813" y="260" width="32" height="31" fill="#dfe3e8"/>
<g font-size="19" fill="#e2e2e2" stroke="#a0a0a0" stroke-width=".8"><text x="1828" y="227">N</text><text x="1773" y="283">W</text><text x="1885" y="283">O</text><text x="1829" y="340">S</text></g><text x="1829" y="281" font-size="12" fill="#999" font-family="Liberation Sans Narrow,Open Sans,sans-serif">OBEN</text></svg>
<button type="button">WKS<svg width="9" height="6"><path d="M.5 .5H8.500L4.500 5z" fill="none" stroke="#aab"/></svg></button>`);

def('cad-navbar',`:host{display:block;width:35px;height:215px;border:2px solid #b5b5b5;border-radius:5px;background:#f2f2f2cc}svg{display:block}`,
`<svg width="31" height="211" viewBox="1877 406 31 211" fill="none" stroke="#d2d2d2" stroke-width="1.200" role="img" aria-label="Navigationsleiste"><circle cx="1902" cy="411" r="3.500"/><path d="M1900 409l4 4m0-4l-4 4M1881 435Q1881 426 1890 427H1895Q1899 427 1899 432V443M1881 435Q1882 445 1890 445"/><circle cx="1889" cy="436" r="8"/><circle cx="1889" cy="436" r="4.500"/><text x="1897" y="449" font-size="10" font-weight="bold" font-family="Open Sans" fill="#b6c8d0" stroke="none" text-anchor="middle">2D</text><path d="M1889 455h6l-3 3z" fill="#bbb"/><path d="M1879 462H1905M1879 570H1905"/>
<path d="M1886 489L1881 482L1883 479L1887 482V471L1889 469L1891 477L1892 467L1895 468V477L1898 469L1900 470L1899 479L1902 476L1902 482L1897 490z"/><path d="M1881 496L1895 511M1895 496L1881 511M1881 500V496H1885M1891 496H1895V500M1881 507V511H1885"/><circle cx="1896" cy="510" r="5"/><path d="M1900 514L1904 518" stroke-width="3"/><path d="M1889 525h6l-3 3z" fill="#bbb"/><path d="M1889 554V540H1886L1891.500 534L1896 540H1894V554zM1900 542Q1904 547 1896 550H1884M1886 547L1882 550L1886 554"/><ellipse cx="1892" cy="546" rx="11" ry="4.500"/><path d="M1889 563h6l-3 3z" fill="#bbb"/><path d="M1881 576h5v5h-5zM1889 576h5v5h-5zM1897 576h5v5h-5zM1881 585H1897V597H1881z"/><path d="M1886 587L1892 591L1886 595z" fill="#ccc"/><circle cx="1902" cy="612" r="3.500"/><path d="M1900 612H1904"/></svg>`);

def('cad-command',`:host{display:flex;height:16px;overflow:hidden;border-radius:3px 3px 0 0;width:474px}
.h{display:flex;padding:2px 4px 0;width:54px;background:linear-gradient(#8b8b8b,#a5a5a5);align-items:flex-start;justify-content:space-between}.h svg{flex:none}
.i{flex:1;display:flex;align-items:flex-start;border:1px solid #7fa5a3;border-bottom:0;height:26px;padding:5px 4px 0 5px;gap:6px;background:#aee9e6e8}
.pr{width:12px;height:14px;background:#e4ecf2;border:1px solid #b4c4cc}.pr svg{display:block}
input{flex:1;height:16px;font:italic 12px/16px "DejaVu Sans Mono",monospace}input::placeholder{color:#8fb4b2;opacity:1}.u{width:0;border:4px solid transparent;border-top:0;border-bottom-color:#46605f;margin-top:5px}.caret{margin:5px 0 0;color:#7fa9a7}`,
`<div class="h"><svg width="7" height="16"><path d="M1 2V16M4.500 2V16" stroke="#ddd" stroke-width="2" stroke-dasharray="2 1"/></svg><svg width="12" height="16" viewBox="0 0 12 16"><path d="M2 7L9 15M9 7L2 15" stroke="#fff" stroke-width="2"/></svg><svg width="14" height="16" viewBox="0 0 14 16"><path d="M2 7Q3 10 6 9Q8 6 5 4M6 8L13 16" stroke="#fff" stroke-width="2.200" fill="none"/></svg></div>
<div class="i"><span class="pr"><svg width="10" height="12"><path d="M2 2L6 6L2 10" stroke="#667" stroke-width="1.500" fill="none"/></svg></span><i class="caret"></i><input aria-label="Befehl" placeholder="Befehl eingeben"><i class="u"></i></div>`);

def('cad-canvas',`:host{display:block;position:relative;flex:1;min-width:0;background:#fff;overflow:hidden;color:#333}
.g{display:block;width:100%;height:100%}
.v{position:absolute;left:3px;top:5px;font-size:12px;line-height:17px;color:#222}
cad-viewcube{position:absolute;right:9px;top:12px}cad-navbar{position:absolute;right:2px;top:210px}cad-command{position:absolute;left:0;right:0;bottom:0;margin:0 auto}`,
()=>`<svg class="g" role="img" aria-label="Hakenschlüssel">${svgDrawing()}</svg><div class="v">[−][Oben][2D-Drahtkörper]</div><cad-viewcube></cad-viewcube><cad-navbar></cad-navbar><cad-command></cad-command>`);

def('cad-workspace',`:host{display:flex;flex:1;min-height:0;background:#5b5b5b}.t{display:flex;gap:3px;width:113px;align-items:flex-start}.c{display:flex;flex-direction:column;gap:1px}`,
`<div class="t"><div class="c"><cad-toolbar tools="line xline pline polygon rect arc circle circle2 cloud spline ellipse elarc insblock block point hatch grad table A atext greendots arctan camera brush dots magic spl2 ucs props refdoc"></cad-toolbar></div>
<div class="c"><cad-toolbar tools="tpoint tfrom - endp mid inter appint center ext - quad tang - perp para insn node - near nosnap - osnap"></cad-toolbar><cad-toolbar tools="brush copy mirror offset move rotate align scale stretch trim extend brkpt brk join chamfer fillet blend explode"></cad-toolbar></div>
<div class="c"><cad-toolbar tools="dlin dali darc dord - drad djog ddia dang - dquick dbase dcont dspace dbreak - dtol dcen dinsp djl - dedit dte dupd - dstyle dbrush dzoom dbrush dsel"></cad-toolbar></div>
<div class="c"><cad-toolbar tools="union subtr intersect - box lsolid mcube cubes xcube rcube taper stackc colcube - filc chac shellc colcube - imprint warnc mirr3 shell chkc"></cad-toolbar><cad-toolbar tools="orb1 orb2 orb3 views explode pot pot2 pot3 gear stack2 cyl"></cad-toolbar></div></div><cad-canvas></cad-canvas>`);

const T={
start:'<path d="M2 6L11 4.700V13H2zM12 4.500L22 3V13H12zM2 14H11V22.300L2 21zM12 14H22V24L12 22.500z" fill="#fff"/>',
search:'<circle cx="14" cy="10" r="5.500" fill="none" stroke="#fff" stroke-width="1.500"/><path d="M10 14L4 21" stroke="#fff" stroke-width="1.700"/>',
mon:'<path d="M1 10L7 8V19L1 18z" fill="#8fae7e" stroke="#dde"/><path d="M5 6L22 3L23 16L7 19z" fill="#e9eef2" stroke="#9aa"/><path d="M8 14L11 8L13 14L16 9L18 13L21 12" stroke="#1b6fa4" fill="none" stroke-width="1.300"/><ellipse cx="16" cy="21" rx="6" ry="3.500" fill="#cfd3d6"/>',
cp:'<rect x="2" y="5" width="21" height="16" fill="#64bdf0" stroke="#bfe4fb"/><circle cx="9" cy="11" r="4" fill="#fff"/><path d="M9 11V7A4 4 0 0 1 13 11z" fill="#1565a5"/><path d="M15 8H21M15 11H21M5 18H20" stroke="#0e65a8" stroke-width="2"/><path d="M8 18h4" stroke="#f4b53c" stroke-width="2"/>',
edge:'<circle cx="13" cy="13" r="12" fill="#1677c8"/><path d="M2 9A12 12 0 0 1 25 14Q24 18 18 18L14 16Q17 9 10 8Q5 8 2 12z" fill="#35c1a0"/><path d="M8 15Q8 9 13 9Q9 12 12 17Q16 22 23 19Q18 26 11 24Q7 20 8 15z" fill="#0c4e9c"/>',
exp:'<path d="M2 4H10L12 6H24V22H2z" fill="#f0a92c"/><path d="M2 8H24V22H2z" fill="#fcd770"/><path d="M6 22V15H20V22H16V18H10V22z" fill="#3c8dd0"/>',
dice:'<path d="M3 8L10 5L21 7L23 12L19 19L11 20L3 17z" fill="#d4dbe8"/><path d="M10 5L12 20" stroke="#777"/><text x="7" y="16" font-size="9" font-family="Liberation Serif,serif" fill="#224" text-anchor="middle">λ</text><text x="16" y="16" font-size="9" font-family="Liberation Sans,sans-serif" fill="#163" text-anchor="middle">7</text>',
paint:'<path d="M2 15Q3 7 12 6Q22 6 22 13Q22 18 17 17Q14 18 16 21Q13 25 7 23Q1 21 2 15z" fill="#cfe6f2" stroke="#7fa6ba" stroke-width=".6"/><circle cx="7" cy="13" r="2" fill="#d33"/><circle cx="12" cy="10" r="2" fill="#f4c430"/><circle cx="17" cy="11" r="1.800" fill="#37a33c"/><circle cx="7" cy="18" r="2" fill="#2d6fd0"/><path d="M12 22L22 4" stroke="#c98b3c" stroke-width="2.500"/><path d="M21 5L24 0L25 4z" fill="#e8c08a"/>',
xl:'<rect x="4" y="3" width="18" height="20" fill="#fff" stroke="#0a6a1c" stroke-width="3"/><text x="13" y="18" font-size="15" font-weight="bold" font-family="Liberation Sans,sans-serif" fill="#0a5a18" stroke="#0a5a18" text-anchor="middle">X</text>',
wd:'<rect x="4" y="3" width="18" height="20" fill="#fff" stroke="#0a0a8a" stroke-width="3"/><text x="13" y="18" font-size="14" font-weight="bold" font-style="italic" font-family="Liberation Serif,serif" fill="#0a0a7a" stroke="#0a0a7a" text-anchor="middle">W</text>',
wmp:'<path d="M3 4L20 3L22 6V21L7 23L3 20z" fill="#5fa3cf"/><path d="M3 4H19V21H3z" fill="#9fd0ec"/><circle cx="12" cy="13" r="7" fill="#f08324" stroke="#fff" stroke-width=".6"/><path d="M10 9L16 13L10 17z" fill="#fff"/>',
teal:'<circle cx="13" cy="13" r="11.500" fill="#1fa5bd"/><path d="M2 10A11.500 11.500 0 0 1 24.400 12Q12 8 2 14z" fill="#4fc3d3"/>',
earth:'<circle cx="13" cy="13" r="11" fill="#b9bdc2"/><path d="M4 8Q14 6 22 17M3 13Q12 10 20 21M8 4Q18 5 24 13" stroke="#f4f4f4" fill="none" stroke-width="2"/><rect x="6" y="17" width="14" height="9" fill="#111"/><text x="13" y="24" font-size="7" fill="#eee" text-anchor="middle" font-family="Liberation Sans,sans-serif">Pro</text>',
www:'<circle cx="13" cy="12" r="10.500" fill="#3f84bd"/><path d="M5 6Q9 1 15 4L12 9L7 12zM16 9L22 8Q24 13 21 17L16 14zM4 13L10 15L9 20Q5 18 4 13z" fill="#cfe7f6"/><rect x="7" y="15" width="18" height="8" fill="#e83a9a"/><text x="16" y="21" font-size="8" font-weight="bold" fill="#fff" text-anchor="middle" font-family="Liberation Sans,sans-serif">www</text>',
acad:'<rect x="1" y="1" width="24" height="24" fill="#fbeae4"/><text x="13" y="21" font-size="22" font-weight="bold" fill="#b3202a" stroke="#b3202a" text-anchor="middle" font-family="Liberation Sans,sans-serif">A</text><path d="M6 20Q12 14 20 17L21 19Q13 16 10 20z" fill="#8c141c"/>'};
def('os-taskbar',`:host{display:flex;height:40px;background:#2c2d2e;color:#fff}
nav{display:flex;flex:1}nav button{width:49px;height:40px;display:grid;place-items:center}nav button.r{box-shadow:inset 0 -2px #76b9ed}nav button.on{background:#585858}
.tray{display:flex;align-items:center;gap:8px;padding-right:4px}.clock{width:60px;text-align:center;font-size:11px;line-height:17px;margin-right:7px}
.end{width:1px;height:40px;background:#777;margin-left:12px}.tray svg{display:block}`,
`<nav aria-label="Taskleiste">${Object.keys(T).map(k=>`<button type="button" aria-label="${k}" class="${k==='exp'||k==='www'?'r':k==='acad'?'r on':''}"><svg width="26" height="26">${T[k]}</svg></button>`).join('')}</nav>
<div class="tray"><svg width="12" height="8"><path d="M0 7L6 1L12 7" fill="none" stroke="#fff" stroke-width="1.300"/></svg>
<svg width="16" height="16" style="margin-left:2px"><rect width="16" height="16" fill="#d81e1e"/><path d="M2.500 8Q4 3 9 3Q14 5 13.500 11Q11.500 8.500 9 9Q6 6.500 2.500 8zM8.500 7L5.500 12" fill="none" stroke="#fff" stroke-width="1.200"/><circle cx="2.500" cy="14" r="2.500" fill="#f4e81c"/></svg>
<svg width="16" height="16" fill="none" stroke="#fff"><path d="M5 3.500H15.500V11.500H3.500V8M9.500 12V14.500M6 14.500H13M.5 2.500H4.500V7.500H.5z"/></svg>
<svg width="17" height="16" fill="none" stroke="#fff" stroke-width="1.200"><path d="M1 6H3.500L7 2.500V13.500L3.500 10H1zM9 5.500Q11 8 9 10.500M11.500 4Q14 8 11.500 12M14 2.500Q17.500 8 14 13.500"/></svg>
<div class="clock">23:50<br>17.05.2021</div><svg width="16" height="16"><path d="M0 0H16V12H10L8 15L6 12H0z" fill="#fff"/><path d="M3 3.500H13M3 6H13M3 8.500H9" stroke="#333"/></svg><i class="end"></i></div>`);

/* strip of the window lying behind at the right edge */
def('os-behind',`:host{display:flex;flex-direction:column;width:8px;background:#fff;overflow:hidden}
.a{height:24px}.b{height:22px;border-bottom:1px solid #ddd}.b i{display:block;width:12px;height:14px;border-radius:7px;background:#0e5fae;margin:3px 0 0 -7px}.c{height:160px;background:linear-gradient(#f6f6f8 92px,#ddd 92px 93px,#fff 93px)}
.s{height:810px;background:#f1f1f1;margin-left:1px;padding-top:17px}.s i{display:block;height:438px;background:#cdcdcd}`,
`<div class="a"></div><div class="b"><i></i></div><div class="c"></div><div class="s"><i></i></div>`);

def('cad-desktop',`:host{display:flex;flex-direction:column;height:100vh;overflow:hidden}.m{display:flex;flex:1;min-height:0}.w{display:flex;flex-direction:column;flex:1;min-width:0;border-right:1px solid #333}`,
`<div class="m"><div class="w"><cad-header></cad-header><cad-tabs></cad-tabs><cad-ribbon></cad-ribbon><cad-files></cad-files><cad-workspace></cad-workspace></div><os-behind></os-behind></div><os-taskbar></os-taskbar>`);
</script>
</body>
</html>
